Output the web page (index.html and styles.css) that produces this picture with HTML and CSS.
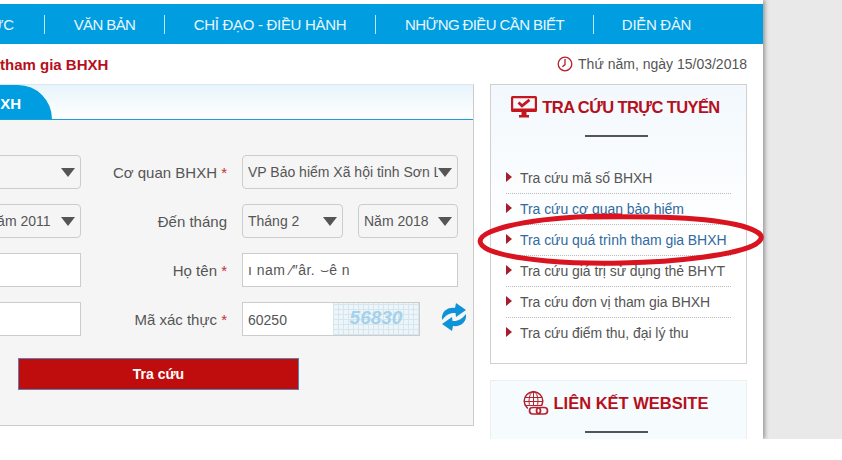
FILE: index.html
```html
<!DOCTYPE html>
<html lang="vi">
<head>
    <meta charset="UTF-8">
    <title>Tra cứu quá trình tham gia BHXH</title>
    <link rel="stylesheet" href="styles.css">
</head>
<body>
    <div class="page">
        <div class="wrapper">
            <!-- Main menu -->
            <nav class="main-nav">
                <a href="#">TIN TỨC</a>
                <a href="#" class="nav-tight">VĂN BẢN</a>
                <a href="#">CHỈ ĐẠO - ĐIỀU HÀNH</a>
                <a href="#" class="nav-tight">NHỮNG ĐIỀU CẦN BIẾT</a>
                <a href="#">DIỄN ĐÀN</a>
            </nav>

            <div class="info-bar">
                <div class="breadcrumb">tham gia BHXH</div>
                <div class="today">
                    <svg class="clock-icon" width="16" height="16" viewBox="0 0 16 16">
                        <circle cx="8" cy="8" r="6.8" fill="none" stroke="#b5202f" stroke-width="1.3"/>
                        <path d="M8 3V8.600L5.400 10.800" fill="none" stroke="#b5202f" stroke-width="1.3"/>
                    </svg>
                    <span>Thứ năm, ngày 15/03/2018</span>
                </div>
            </div>

            <div class="content">
                <!-- Search form -->
                <section class="search-panel">
                    <div class="tab-head">
                        <div class="tab-title">THAM GIA BHXH</div>
                    </div>
                    <div class="search-form">
                        <div class="form-row">
                            <div class="select wide"><span></span></div>
                            <label class="form-label">Cơ quan BHXH <em>*</em></label>
                            <div class="select wide"><span>VP Bảo hiểm Xã hội tỉnh Sơn La</span></div>
                        </div>
                        <div class="form-row">
                            <div class="select-pair">
                                <div class="select"><span>Tháng 1</span></div>
                                <div class="select year"><span>Năm 2011</span></div>
                            </div>
                            <label class="form-label">Đến tháng</label>
                            <div class="select-pair">
                                <div class="select"><span>Tháng 2</span></div>
                                <div class="select year"><span>Năm 2018</span></div>
                            </div>
                        </div>
                        <div class="form-row">
                            <div class="text-box"></div>
                            <label class="form-label">Họ tên <em>*</em></label>
                            <div class="text-box"><span class="blurred">ı nam ⁄″âr. ⌣ê n</span></div>
                        </div>
                        <div class="form-row">
                            <div class="text-box"></div>
                            <label class="form-label">Mã xác thực <em>*</em></label>
                            <div class="captcha-group">
                                <div class="captcha-input">60250</div>
                                <div class="captcha-img">56830</div>
                                <svg class="refresh-icon" width="26" height="28" viewBox="0 0 26 28">
                                    <path d="M1 17C0 9 6 4 14 5L15 0L25 7L15 14L14.500 10C9 9.500 5 12 1 17Z" fill="#0f93d8"/>
                                    <path d="M25 11C26 19 20 24 12 23L11 28L1 21L11 14L11.500 18C17 18.500 21 16 25 11Z" fill="#0f93d8"/>
                                </svg>
                            </div>
                        </div>
                        <button type="button" class="submit-btn">Tra cứu</button>
                    </div>
                </section>

                <!-- Sidebar -->
                <aside class="sidebar">
                    <div class="side-box lookup-box">
                        <h2 class="side-title">
                            <svg width="26" height="22" viewBox="0 0 26 22">
                                <path d="M1.500 0H24.500A1.500 1.500 0 0 1 26 1.500V14.500A1.500 1.500 0 0 1 24.500 16H1.500A1.500 1.500 0 0 1 0 14.500V1.500A1.500 1.500 0 0 1 1.500 0ZM2.200 2.200V12.500H23.800V2.200Z" fill="#c4161c"/>
                                <path d="M7.500 6.500L11 9.800L18.500 3.800" fill="none" stroke="#c4161c" stroke-width="2.800"/>
                                <path d="M10.500 16H15.500V19H18V21.500H8V19H10.500Z" fill="#c4161c"/>
                            </svg>
                            <span class="tight">TRA CỨU TRỰC TUYẾN</span>
                        </h2>
                        <div class="title-rule"></div>
                        <ul class="lookup-list">
                            <li><a href="#">Tra cứu mã số BHXH</a></li>
                            <li><a href="#" class="blue-link">Tra cứu cơ quan bảo hiểm</a></li>
                            <li><a href="#" class="blue-link">Tra cứu quá trình tham gia BHXH</a></li>
                            <li><a href="#">Tra cứu giá trị sử dụng thẻ BHYT</a></li>
                            <li><a href="#">Tra cứu đơn vị tham gia BHXH</a></li>
                            <li><a href="#">Tra cứu điểm thu, đại lý thu</a></li>
                        </ul>
                    </div>
                    <div class="side-box links-box">
                        <h2 class="side-title">
                            <svg width="26" height="24" viewBox="0 0 26 24">
                                <g fill="none" stroke="#b5202f" stroke-width="1">
                                    <circle cx="10.500" cy="10" r="9.300" stroke-width="1.500"/>
                                    <ellipse cx="10.500" cy="10" rx="4.500" ry="9.300"/>
                                    <path d="M2 6.500H19M1.200 10.500H19.800M2.500 14.500H18.500M10.500 1V19"/>
                                </g>
                                <rect x="5" y="15" width="21" height="9" fill="#f6fbfe"/>
                                <rect x="6.500" y="16.500" width="11" height="6.500" rx="3.200" fill="none" stroke="#b5202f" stroke-width="1.700"/>
                                <rect x="13.500" y="16.500" width="11" height="6.500" rx="3.200" fill="none" stroke="#b5202f" stroke-width="1.700"/>
                            </svg>
                            LIÊN KẾT WEBSITE
                        </h2>
                        <div class="title-rule"></div>
                    </div>
                </aside>
            </div>
        </div>
    </div>

    <!-- Hand drawn mark over the highlighted row -->
    <svg class="red-mark" width="300" height="70" viewBox="0 0 300 70">
        <path d="M150 11C95 10 40 17 18 27C5 33 5 39 17 45C45 56 100 59 150 58C205 57 265 50 284 39C294 32 290 27 270 21C235 12 180 11 115 12" fill="none" stroke="#d9131f" stroke-width="5"/>
    </svg>
</body>
</html>
```

FILE: styles.css
```css
/* General Styles */
body {
    margin: 0;
    padding: 0;
    background: #fff;
    color: #555;
    font-family: Tahoma, "Liberation Sans", Arial, sans-serif;
    font-size: 14px;
    overflow: hidden;
}

a {
    text-decoration: none;
    color: inherit;
}

.page {
    height: 439px;
    background: #e9e9e9;
    overflow: hidden;
}

.wrapper {
    width: 763px;
    height: 439px;
    padding-top: 4px;
    box-sizing: border-box;
    background: #fff;
    box-shadow: 2px 0 4px rgba(0, 0, 0, 0.35);
    overflow: hidden;
}

/* Main menu */
.main-nav {
    display: grid;
    grid-template-columns: 120px 120px 211px 218px 126px;
    justify-content: end;
    align-items: center;
    height: 40px;
    padding-right: 44px;
    background: #009de0;
    color: #e9f6fc;
    font-size: 15px;
    letter-spacing: -0.3px;
}

.main-nav a {
    height: 19px;
    line-height: 19px;
    border-left: 1px solid #bfe6f7;
    text-align: center;
    white-space: nowrap;
}

.main-nav .nav-tight {
    letter-spacing: -0.6px;
}

.info-bar {
    display: flex;
    justify-content: space-between;
    align-items: center;
    height: 40px;
    padding-right: 16px;
}

.breadcrumb {
    color: #b5101c;
    font-size: 15px;
    font-weight: bold;
    white-space: nowrap;
}

.today {
    display: flex;
    align-items: center;
    gap: 5px;
}

.content {
    display: flex;
    justify-content: flex-end;
    gap: 16px;
    padding-right: 16px;
}

/* Search form */
.search-panel {
    flex: none;
    width: 640px;
    height: 342px;
    box-sizing: border-box;
    border: 1px solid #ccc;
    border-top-color: #d8e8f2;
    background: #f5f5f5;
}

.tab-head {
    height: 34px;
    background: linear-gradient(#e8f4fb, #fff);
    border-bottom: 1px solid #1b9ed9;
}

.tab-title {
    width: 217px;
    height: 34px;
    line-height: 38px;
    text-align: right;
    padding-right: 31px;
    box-sizing: border-box;
    background: #009de0;
    border-top-right-radius: 34px 34px;
    color: #fff;
    font-size: 15px;
    font-weight: bold;
    white-space: nowrap;
}

.search-form {
    display: flex;
    flex-direction: column;
    gap: 15px;
    padding-top: 35px;
    padding-right: 15px;
}

.form-row {
    display: flex;
    justify-content: flex-end;
    align-items: center;
    height: 34px;
}

.form-label {
    width: 146px;
    margin-right: 15px;
    padding-top: 1px;
    text-align: right;
    font-size: 15px;
    white-space: nowrap;
}

.form-label em {
    color: #c0303a;
    font-style: normal;
}

.select,
.text-box {
    box-sizing: border-box;
    height: 34px;
    line-height: 33px;
    padding-left: 5px;
    border: 1px solid #ccc;
    white-space: nowrap;
}

.select {
    position: relative;
    flex: none;
    width: 101px;
    background: #f5f5f5;
    border-radius: 4px;
    overflow: hidden;
}

.select.year {
    width: 100px;
}

.select span {
    display: block;
    overflow: hidden;
    margin-right: 19px;
}

.select::after {
    content: "";
    position: absolute;
    top: 12px;
    right: 5px;
    border-style: solid;
    border-width: 9px 7.500px 0;
    border-color: #555 transparent transparent;
}

.select.wide,
.text-box,
.select-pair,
.captcha-group {
    width: 216px;
}

.select-pair {
    display: flex;
    justify-content: space-between;
    flex: none;
}

.text-box {
    flex: none;
    background: #fff;
}

.blurred {
    letter-spacing: 0.5px;
}

.captcha-group {
    display: flex;
    align-items: center;
    flex: none;
}

.captcha-input {
    flex: none;
    box-sizing: border-box;
    width: 91px;
    height: 34px;
    line-height: 35px;
    padding-left: 5px;
    background: #fff;
    border: 1px solid #ccc;
    border-right: none;
}

.captcha-img {
    flex: none;
    width: 87px;
    height: 34px;
    box-sizing: border-box;
    line-height: 30px;
    text-align: center;
    border: 1px solid #ccc;
    border-left: none;
    background-color: #edf5f8;
    background-image:
        repeating-linear-gradient(0deg, #d5e6ee 0 1px, transparent 1px 5px),
        repeating-linear-gradient(90deg, #d5e6ee 0 1px, transparent 1px 5px);
    color: #a5d2ea;
    font-size: 19px;
    font-weight: bold;
    font-style: italic;
}

.refresh-icon {
    flex: none;
    margin-left: 21px;
    margin-top: -4px;
    margin-right: -9px;
}

.submit-btn {
    align-self: flex-end;
    width: 281px;
    height: 32px;
    margin-top: 7px;
    margin-right: 159px;
    border: 1px solid #5c7fb5;
    background: #bf0d0d;
    color: #fff;
    font-family: inherit;
    font-size: 14px;
    font-weight: bold;
}

/* Sidebar */
.sidebar {
    flex: none;
    width: 257px;
    display: flex;
    flex-direction: column;
    gap: 16px;
}

.side-box {
    box-sizing: border-box;
    border: 1px solid #d0d0d0;
    background: #fff;
}

.lookup-box {
    height: 280px;
    background: linear-gradient(#f2f8fd, #fff 55%);
}

.links-box {
    height: 120px;
    border-color: #eee;
    background: #f6fbfe;
}

.side-title {
    display: flex;
    justify-content: center;
    align-items: center;
    gap: 5px;
    height: 24px;
    margin: 10px 6px 0 0;
    color: #b5101c;
    font-size: 16.500px;
    font-weight: bold;
    white-space: nowrap;
}

.tight {
    letter-spacing: -0.6px;
}

.title-rule {
    width: 63px;
    height: 2px;
    margin: 16px 0 0 94px;
    background: #555;
}

.lookup-list {
    list-style: none;
    margin: 26px 15px 0;
    padding: 0;
}

.lookup-list li {
    position: relative;
    height: 30px;
    line-height: 30px;
    padding-left: 14px;
    border-bottom: 1px dotted #bbb;
    letter-spacing: -0.05px;
    white-space: nowrap;
}

.lookup-list li:last-child {
    border-bottom: none;
}

.lookup-list li::before {
    content: "";
    position: absolute;
    left: 0;
    top: 9px;
    border-style: solid;
    border-width: 5px 0 5px 6px;
    border-color: transparent transparent transparent #a81c2c;
}

.blue-link {
    color: #2f6a9f;
}

/* Hand drawn mark */
.red-mark {
    position: absolute;
    left: 472px;
    top: 205px;
}
```
